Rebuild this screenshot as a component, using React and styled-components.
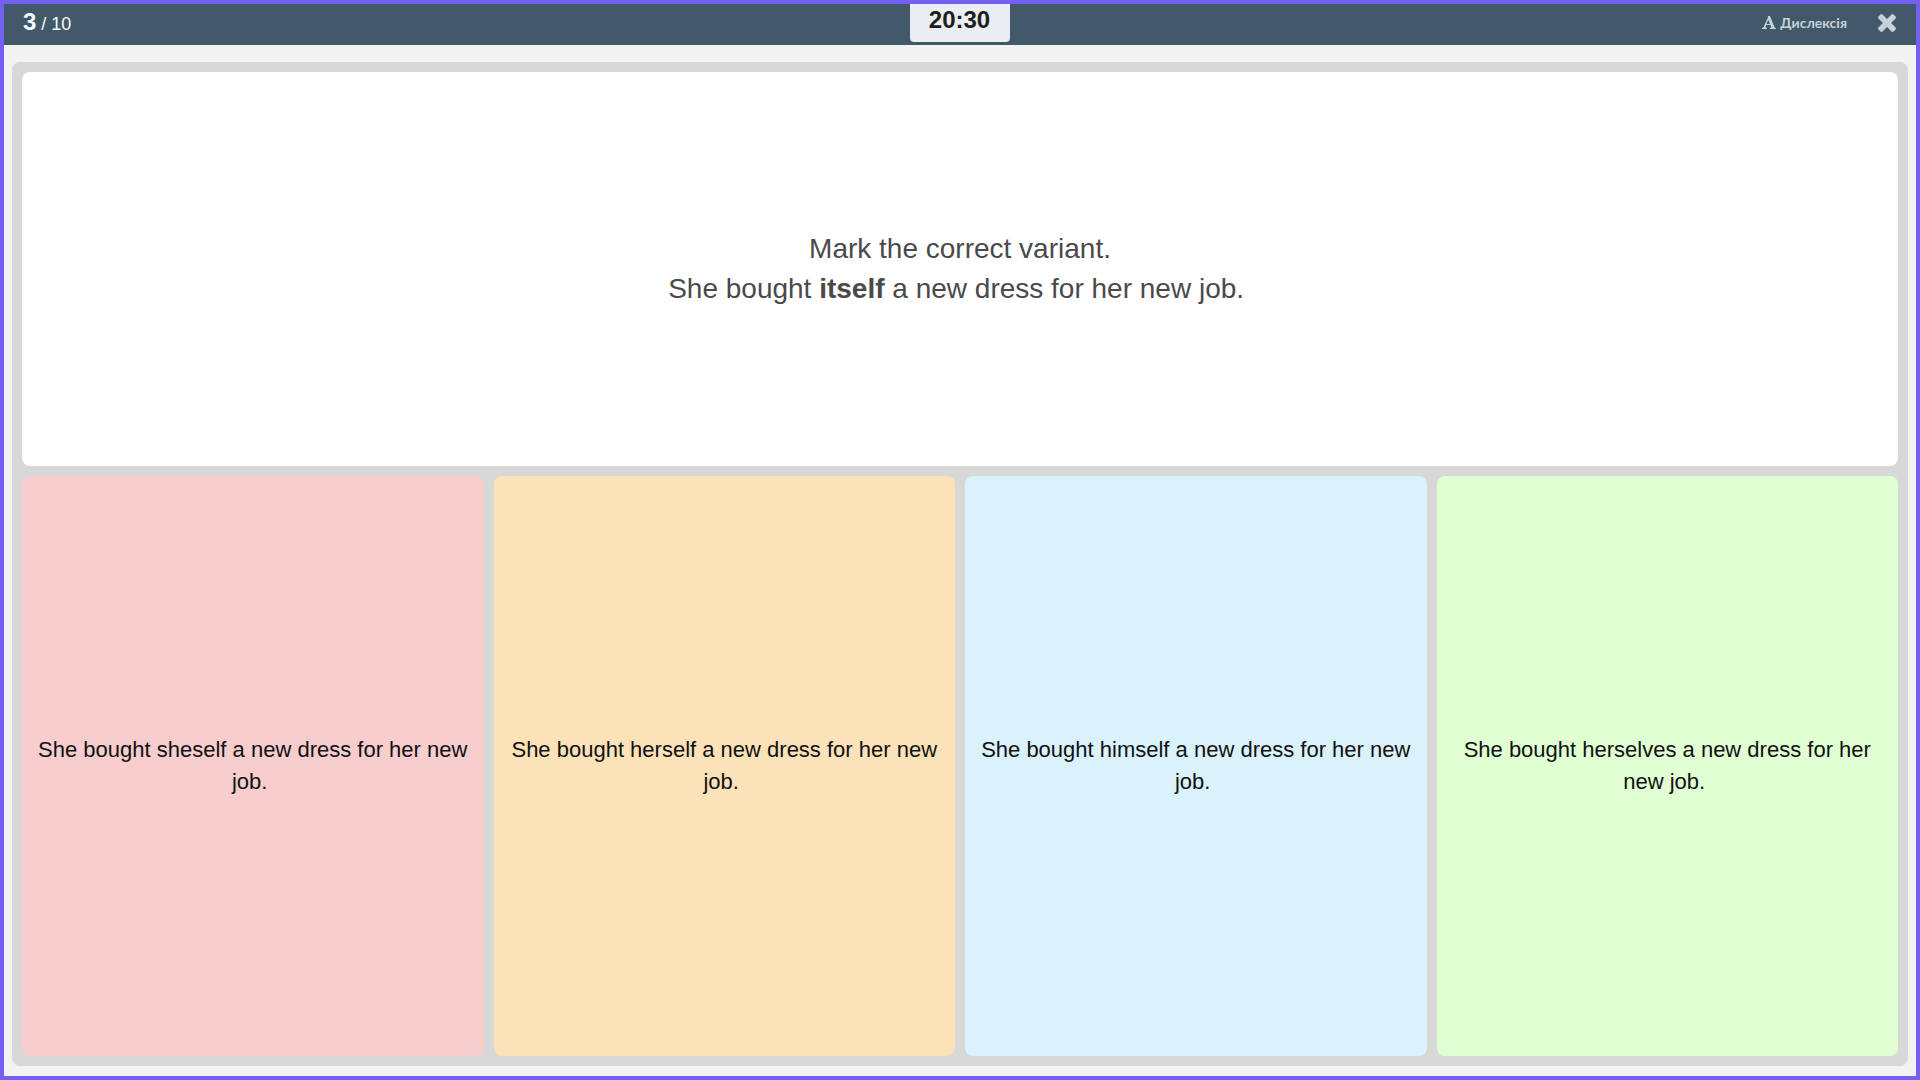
import React from "react";
import styled, { createGlobalStyle } from "styled-components";

const GlobalStyle = createGlobalStyle`
  *, *::before, *::after { box-sizing: border-box; }
  body {
    margin: 0;
    font-family: "Liberation Sans", Arial, sans-serif;
    background: #f1f1f1;
  }
`;

const Screen = styled.div`
  display: flex;
  flex-direction: column;
  min-height: 100vh;
  border: 4px solid #755ff0;
  background: #f2f2f3;
`;

const TopBar = styled.header`
  display: grid;
  grid-template-columns: 1fr auto 1fr;
  height: 41px;
  padding: 0 20px 0 19px;
  background: #42596a;
`;

const Progress = styled.div`
  display: flex;
  align-items: baseline;
  gap: 5px;
  padding-top: 4px;
  color: #f4fbff;
  font-size: 18px;
  line-height: 28px;

  strong {
    font-size: 24px;
  }
`;

const Timer = styled.time`
  width: 100px;
  height: 38px;
  border-radius: 0 0 4px 4px;
  background: #eaedf1;
  color: #1b1f20;
  font-size: 24px;
  font-weight: 700;
  line-height: 32px;
  text-align: center;
`;

const Tools = styled.div`
  display: flex;
  align-items: center;
  justify-content: flex-end;
  gap: 31px;
  padding-bottom: 4px;
`;

const ToolButton = styled.button`
  display: flex;
  align-items: center;
  gap: 4px;
  padding: 0;
  border: 0;
  background: none;
  color: #c6d2da;
  font-family: Lato, sans-serif;
  font-size: 14px;
  font-weight: 700;
  line-height: 20px;
  cursor: pointer;

  svg {
    display: block;
    fill: currentColor;
  }
`;

const Board = styled.main`
  flex: 1;
  display: grid;
  grid-template-rows: 394fr 580fr;
  gap: 10px;
  margin: 17px 8px 10px;
  padding: 10px;
  border-radius: 8px;
  background: #d8d8d8;
`;

const Question = styled.section`
  display: flex;
  align-items: center;
  justify-content: center;
  padding: 10px;
  border-radius: 8px;
  background: #fff;
`;

const QuestionText = styled.p`
  margin: 0;
  color: #4a4a4a;
  font-size: 28px;
  line-height: 40px;
  text-align: center;
`;

const Answers = styled.div`
  display: grid;
  grid-template-columns: repeat(4, 1fr);
  gap: 10px;
`;

const Answer = styled.button`
  padding: 10px;
  border: 0;
  border-radius: 8px;
  background: ${({ $color }) => $color};
  color: #111;
  font-family: inherit;
  font-size: 22px;
  line-height: 32px;
  text-align: center;
  cursor: pointer;
`;

const answers = [
  { text: "She bought sheself a new dress for her new job.\u00a0", color: "#f7cdce" },
  { text: "She bought herself a new dress for her new job.\u00a0", color: "#fce2b9" },
  { text: "She bought himself a new dress for her new job.\u00a0", color: "#d9f2fc" },
  { text: "She bought herselves a new dress for her new job.\u00a0", color: "#e0ffd2" },
];

const FontIcon = () => (
  <svg width="14" height="13" viewBox="0 0 28 26" aria-hidden="true">
    <path
      fillRule="evenodd"
      d="M11.500 0H16L25 22.500Q25.500 23.500 28 24V26H15.500V24Q18.800 23.800 18.300 22.200L17 18H8.300L7 21.500Q6.500 23.500 10 24V26H0V24Q2.500 23.500 3.200 22L12 2.500ZM12.500 7.500L9 16H16Z"
    />
  </svg>
);

const CloseIcon = () => (
  <svg width="18" height="18" viewBox="110 366 1188 1188" aria-hidden="true">
    <path d="M1298 1322q0 40-28 68l-136 136q-28 28-68 28t-68-28l-294-294-294 294q-28 28-68 28t-68-28l-136-136q-28-28-28-68t28-68l294-294-294-294q-28-28-28-68t28-68l136-136q28-28 68-28t68 28l294 294 294-294q28-28 68-28t68 28l136 136q28 28 28 68t-28 68l-294 294 294 294q28 28 28 68z" />
  </svg>
);

export default function App() {
  return (
    <Screen>
      <GlobalStyle />
      <TopBar>
        <Progress>
          <strong>3</strong>
          <span>/ 10</span>
        </Progress>
        <Timer>20:30</Timer>
        <Tools>
          <ToolButton type="button">
            <FontIcon />
            Дислексія
          </ToolButton>
          <ToolButton type="button" aria-label="Закрити">
            <CloseIcon />
          </ToolButton>
        </Tools>
      </TopBar>
      <Board>
        <Question>
          <QuestionText>
            Mark the correct variant.
            <br />
            She bought <strong>itself</strong> a new dress for her new job.&nbsp;
          </QuestionText>
        </Question>
        <Answers>
          {answers.map(({ text, color }) => (
            <Answer key={color} type="button" $color={color}>
              {text}
            </Answer>
          ))}
        </Answers>
      </Board>
    </Screen>
  );
}
